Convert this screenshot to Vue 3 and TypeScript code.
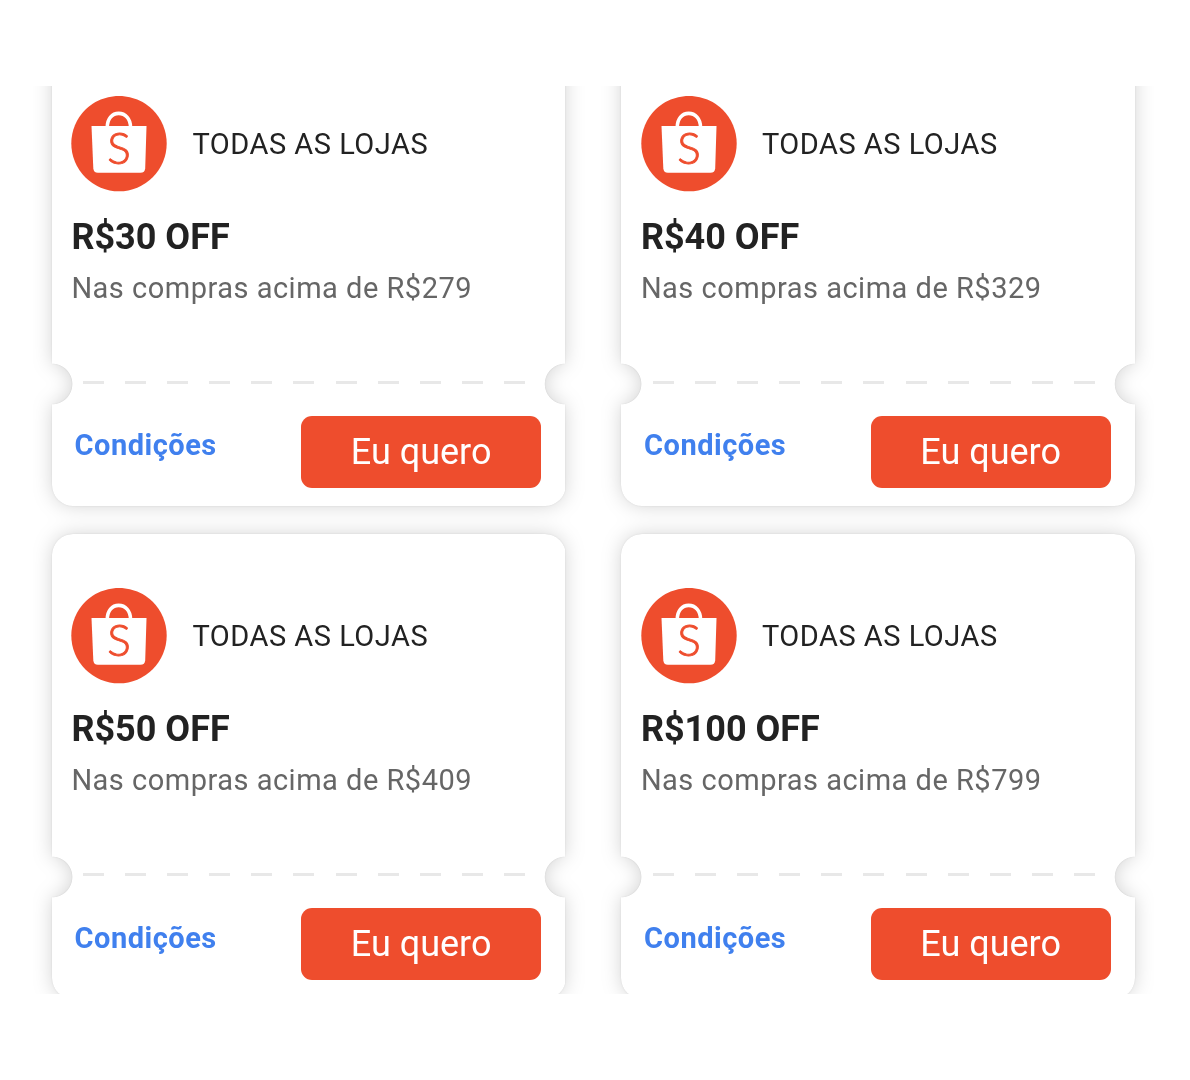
<script setup lang="ts">
interface Coupon {
  discount: string
  rule: string
}

const coupons: Coupon[] = [
  { discount: 'R$30 OFF', rule: 'Nas compras acima de R$279' },
  { discount: 'R$40 OFF', rule: 'Nas compras acima de R$329' },
  { discount: 'R$50 OFF', rule: 'Nas compras acima de R$409' },
  { discount: 'R$100 OFF', rule: 'Nas compras acima de R$799' },
]
</script>

<template>
  <main class="viewport">
    <div class="coupons">
      <article v-for="coupon in coupons" :key="coupon.discount" class="coupon">
        <header class="store">
          <svg class="logo" viewBox="0 0 96 96" aria-hidden="true">
            <circle cx="48" cy="47.6" r="47.7" fill="#ee4d2d" />
            <path d="M36.3 31.2C36.3 22.7 41.1 17.4 47.7 17.4S59.5 22.7 59.5 31.2" fill="none" stroke="#fff" stroke-width="3.6" />
            <path d="M20.5 29.9H75.5L74.2 72.2Q73.9 76.7 69.4 76.7H26.9Q22.7 76.7 22.3 72.2Z" fill="#fff" />
            <text class="logo-letter" x="47.9" y="68.2" text-anchor="middle">S</text>
          </svg>
          <span class="store-name">TODAS AS LOJAS</span>
        </header>
        <h2 class="discount">{{ coupon.discount }}</h2>
        <p class="rule">{{ coupon.rule }}</p>
        <div class="perforation"></div>
        <footer class="actions">
          <a class="terms">Condições</a>
          <button class="claim" type="button">Eu quero</button>
        </footer>
      </article>
    </div>
  </main>
</template>

<style>
body {
  margin: 0;
  background: #fff;
}
</style>

<style scoped>
.viewport {
  box-sizing: border-box;
  width: 1121px;
  height: 908px;
  margin: 86px 0 0 33px;
  overflow: hidden;
  font-family: Roboto, sans-serif;
}

.coupons {
  display: grid;
  grid-template-columns: 514px 514px;
  grid-auto-rows: 465px;
  column-gap: 55.5px;
  row-gap: 27.5px;
  margin: -45px 0 0 18.5px;
  filter: drop-shadow(0 0 0.8px rgba(0, 0, 0, 0.08)) drop-shadow(0 0 9.5px rgba(0, 0, 0, 0.17));
}

.coupon {
  box-sizing: border-box;
  display: flex;
  flex-direction: column;
  height: 465px;
  padding: 55px 24.4px 18px 19.9px;
  border-radius: 21px;
  background: #fff;
  -webkit-mask:
    radial-gradient(circle 20.5px at 0 343px, transparent 20px, #000 20.8px) left / 51% 100% no-repeat,
    radial-gradient(circle 20.5px at 100% 343px, transparent 20px, #000 20.8px) right / 51% 100% no-repeat;
}

.store {
  display: flex;
  align-items: center;
  gap: 25px;
  height: 95px;
}

.logo {
  flex: none;
  width: 96px;
  height: 96px;
}

.logo-letter {
  font: 300 44px Lato, sans-serif;
  fill: #ee4d2d;
  stroke: #ee4d2d;
  stroke-width: 0.9px;
}

.store-name {
  font-size: 29px;
  letter-spacing: 0.5px;
  color: #222;
}

.discount {
  margin: 23.5px 0 0;
  font-size: 36px;
  line-height: 44px;
  font-weight: 700;
  color: #222;
}

.rule {
  margin: 10.2px 0 0;
  font-size: 29px;
  line-height: 38px;
  letter-spacing: 0.5px;
  color: #666;
}

.perforation {
  width: 442px;
  height: 3px;
  margin: 74px 0 0 11.7px;
  background: repeating-linear-gradient(90deg, #e8e8e8 0 21px, transparent 21px 42.1px);
}

.actions {
  display: flex;
  justify-content: space-between;
  margin-top: 32px;
}

.terms {
  margin: 10.8px 0 0 3.2px;
  font-size: 29px;
  line-height: 38px;
  letter-spacing: 0.5px;
  font-weight: 700;
  color: #4080ee;
}

.claim {
  width: 240px;
  height: 72px;
  padding: 0;
  border: 0;
  border-radius: 11px;
  background: #ee4d2d;
  font: 400 36px Roboto, sans-serif;
  color: #fff;
}
</style>
